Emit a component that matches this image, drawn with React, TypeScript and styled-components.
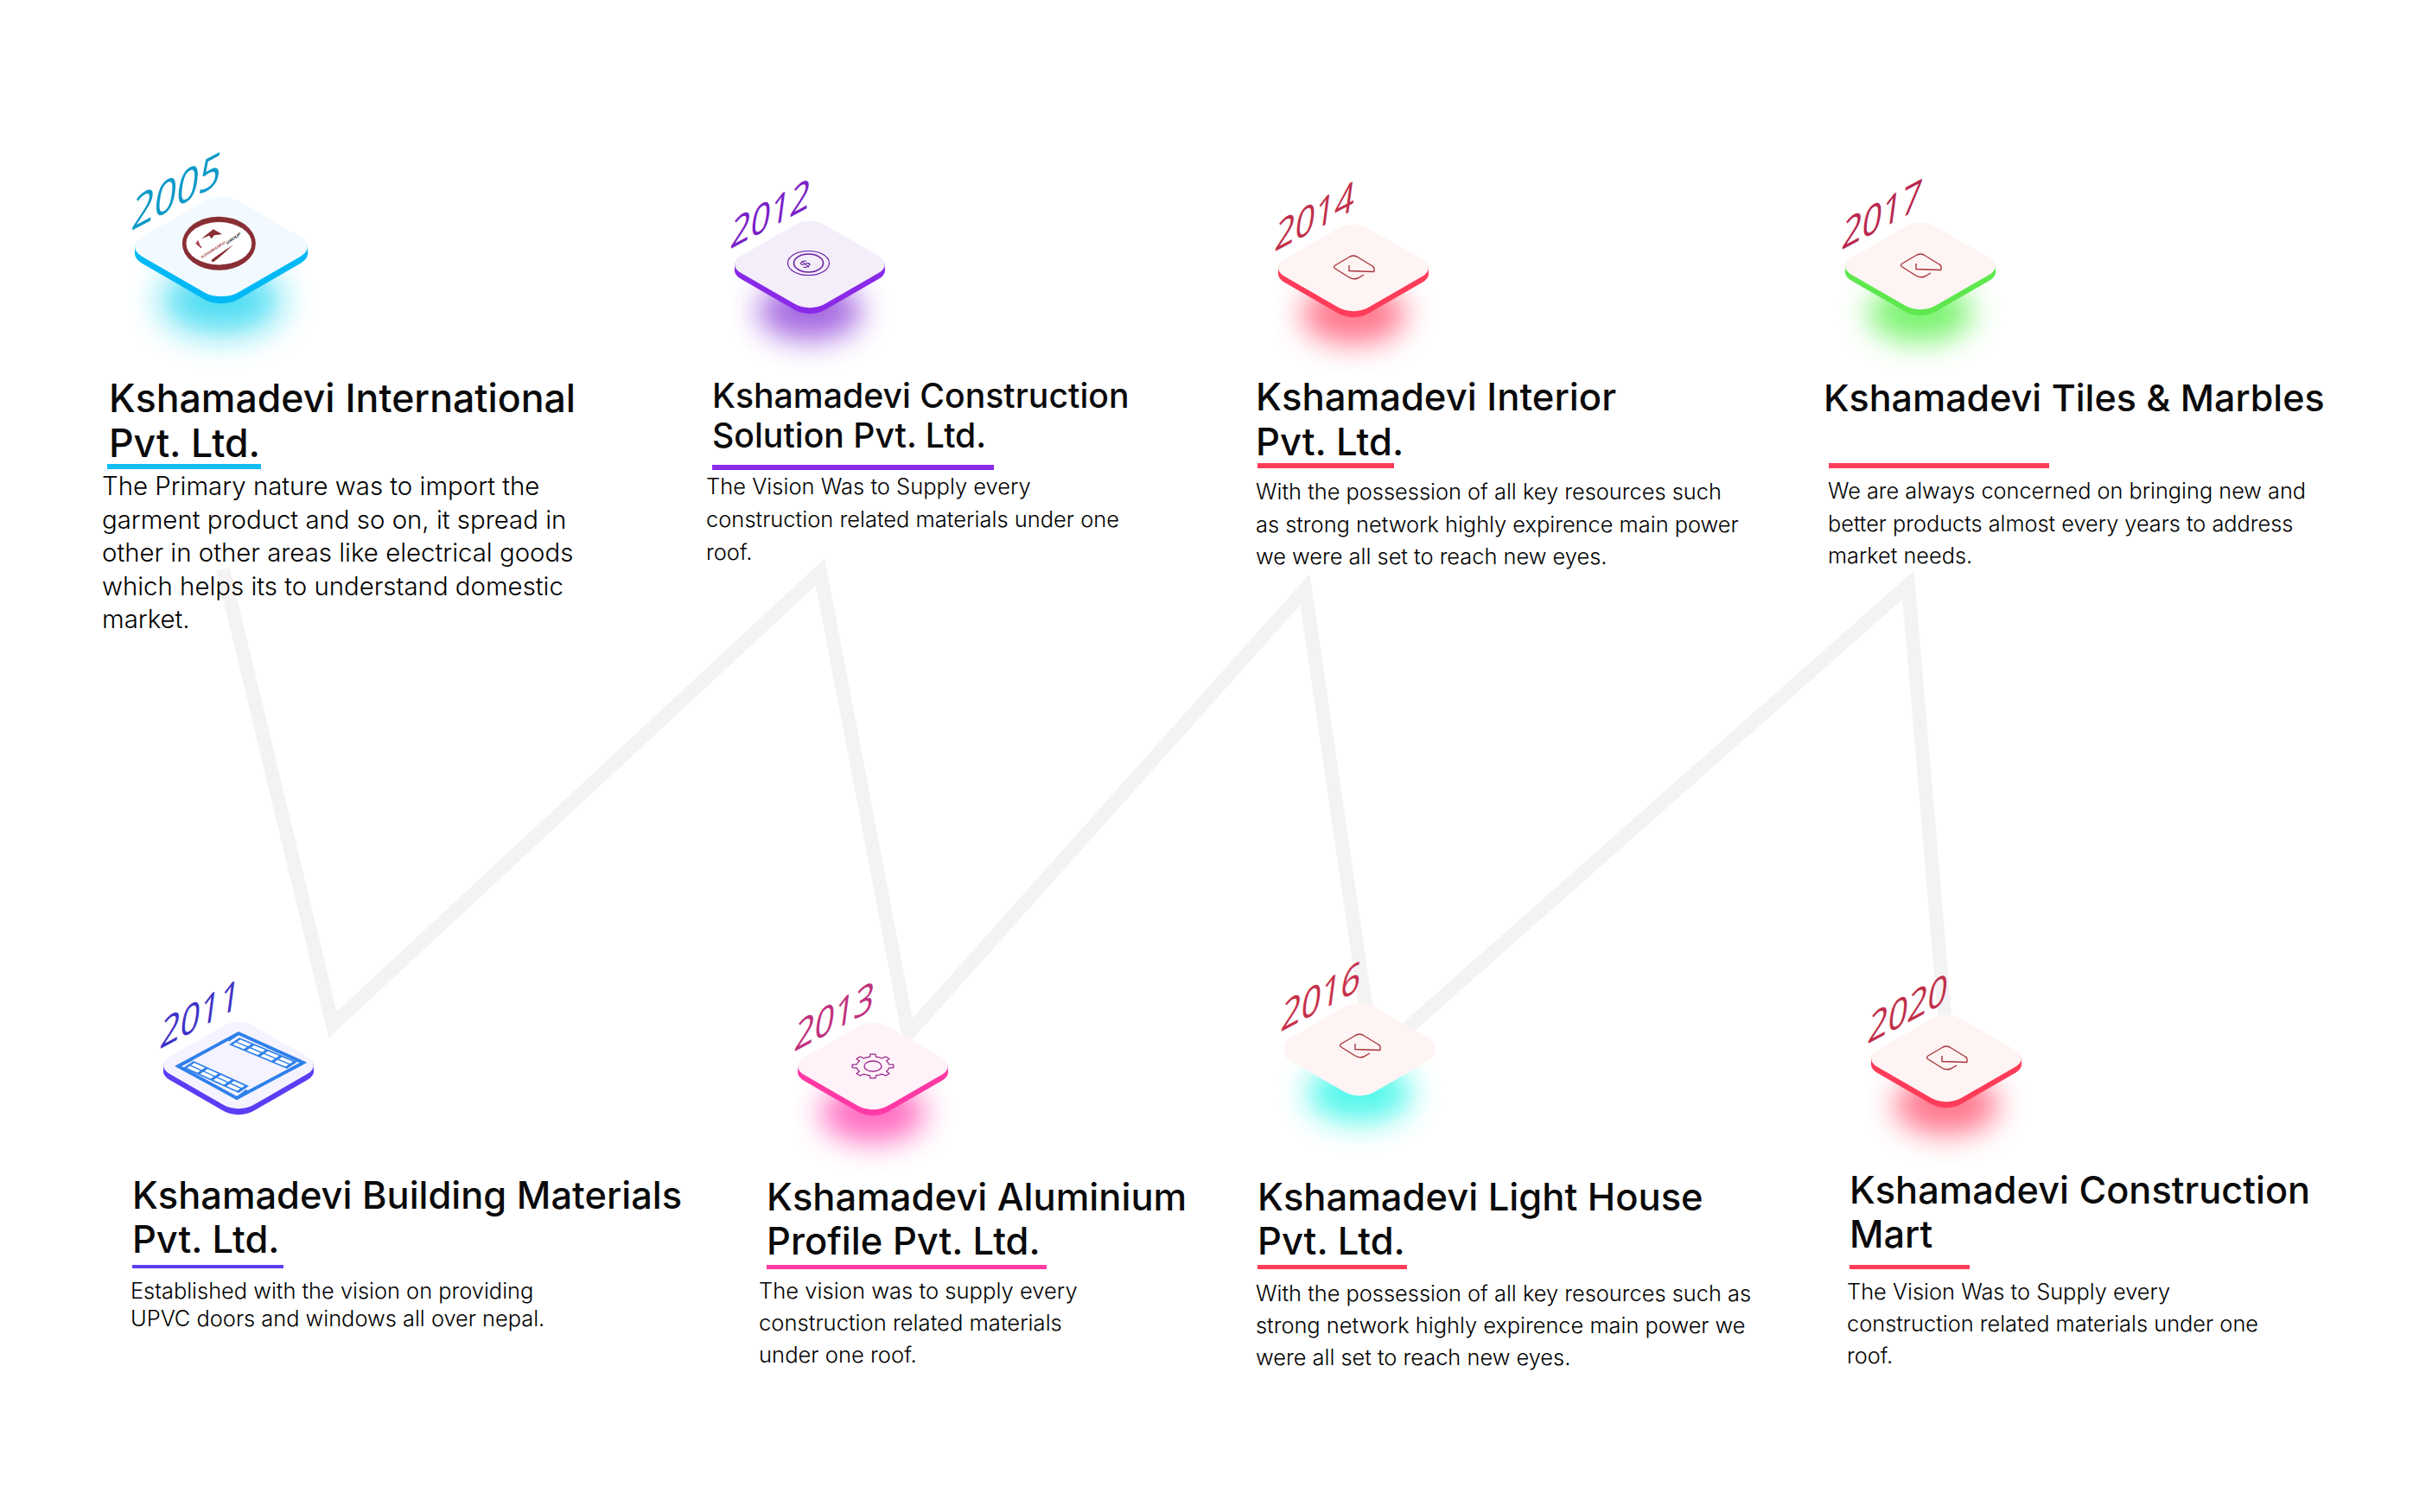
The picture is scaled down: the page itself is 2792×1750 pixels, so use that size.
import React from 'react'
import styled, { createGlobalStyle } from 'styled-components'

const GlobalStyle = createGlobalStyle`
  html, body {
    margin: 0;
    padding: 0;
    background: #fff;
  }
`

type IconKind = 'logo' | 'coin' | 'mail' | 'window' | 'gear'

type Milestone = {
  year: string
  yearColor: string
  yearSize: number
  yearX: number
  yearY: number
  face: string
  edge: string
  glow?: string
  icon: IconKind
  width: number
  top: number
  left: number
  tileX: number
  titleX: number
  titleTop: number
  titleSize: number
  titleLine: number
  title: string
  barX: number
  barTop: number
  barWidth: number
  barHeight: number
  barColor: string
  bodyX: number
  bodyTop: number
  bodySize: number
  bodyLine: number
  body: string
}

const MILESTONES: Milestone[] = [
  {
    year: '2005', yearColor: '#0e9ac8', yearSize: 45, yearX: -6, yearY: 46,
    face: '#f2faff', edge: '#00b9f5', glow: '#12d3ee', icon: 'logo', width: 200,
    top: 228, left: 18, tileX: 38, titleX: 8, titleTop: 83, titleSize: 44.6, titleLine: 52,
    title: 'Kshamadevi International\nPvt. Ltd.',
    barX: 6, barTop: -2, barWidth: 178, barHeight: 6, barColor: '#12bdf5',
    bodyX: 0, bodyTop: 1, bodySize: 29.4, bodyLine: 38.5,
    body: 'The Primary nature was to import the\ngarment product and so on, it spread in\nother in other areas like electrical goods\nwhich helps its to understand domestic\nmarket.',
  },
  {
    year: '2012', yearColor: '#7a20c8', yearSize: 40, yearX: -7, yearY: 39,
    face: '#f4eefb', edge: '#8a2be8', glow: '#8a3ad8', icon: 'coin', width: 174,
    top: 256, left: 17, tileX: 33, titleX: 7, titleTop: 71, titleSize: 39.2, titleLine: 46,
    title: 'Kshamadevi Construction\nSolution Pvt. Ltd.',
    barX: 7, barTop: 11, barWidth: 326, barHeight: 6, barColor: '#8a2be8',
    bodyX: 0, bodyTop: 0, bodySize: 25.5, bodyLine: 38,
    body: 'The Vision Was to Supply every\nconstruction related materials under one\nroof.',
  },
  {
    year: '2014', yearColor: '#c0304a', yearSize: 40, yearX: -6, yearY: 38,
    face: '#fff4f4', edge: '#ff3d5a', glow: '#ff4d6a', icon: 'mail', width: 174,
    top: 260, left: 13, tileX: 26, titleX: 0, titleTop: 66, titleSize: 43.6, titleLine: 52,
    title: 'Kshamadevi Interior\nPvt. Ltd.',
    barX: 2, barTop: -2, barWidth: 158, barHeight: 6, barColor: '#ff3d5a',
    bodyX: 0, bodyTop: 8, bodySize: 25.4, bodyLine: 37.5,
    body: 'With the possession of all key resources such\nas strong network highly expirence main power\nwe were all set to reach new eyes.',
  },
  {
    year: '2017', yearColor: '#b8274f', yearSize: 40, yearX: -6, yearY: 38,
    face: '#fff4f4', edge: '#5fe84f', glow: '#52f044', icon: 'mail', width: 174,
    top: 258, left: 10, tileX: 25, titleX: 0, titleTop: 68, titleSize: 43, titleLine: 52,
    title: 'Kshamadevi Tiles & Marbles',
    barX: 6, barTop: 50, barWidth: 255, barHeight: 6, barColor: '#ff3d5a',
    bodyX: 5, bodyTop: 7, bodySize: 25.3, bodyLine: 37.5,
    body: 'We are always concerned on bringing new and\nbetter products almost every years to address\nmarket needs.',
  },
  {
    year: '2011', yearColor: '#3f33c8', yearSize: 40, yearX: -6, yearY: 38,
    face: '#f5f3ff', edge: '#5b3ff5', icon: 'window', width: 174,
    top: 93, left: 51, tileX: 38, titleX: 2, titleTop: 67, titleSize: 43.4, titleLine: 51,
    title: 'Kshamadevi Building Materials\nPvt. Ltd.',
    barX: 2, barTop: 4, barWidth: 175, barHeight: 4, barColor: '#5b3ff5',
    bodyX: 0, bodyTop: 10, bodySize: 25.4, bodyLine: 32,
    body: 'Established with the vision on providing\nUPVC doors and windows all over nepal.',
  },
  {
    year: '2013', yearColor: '#c0307e', yearSize: 40, yearX: -6, yearY: 40,
    face: '#fff3f9', edge: '#ff3aa6', glow: '#ff3fae', icon: 'gear', width: 174,
    top: 94, left: 78, tileX: 45, titleX: 9, titleTop: 68, titleSize: 43.5, titleLine: 51,
    title: 'Kshamadevi Aluminium\nProfile Pvt. Ltd.',
    barX: 9, barTop: 2, barWidth: 324, barHeight: 5, barColor: '#ff3aa6',
    bodyX: 0, bodyTop: 6, bodySize: 25.6, bodyLine: 37,
    body: 'The vision was to supply every\nconstruction related materials\nunder one roof.',
  },
  {
    year: '2016', yearColor: '#c8304a', yearSize: 40, yearX: -6, yearY: 40,
    face: '#fff4f4', edge: '#fff4f4', glow: '#1ff5e6', icon: 'mail', width: 174,
    top: 71, left: 13, tileX: 33, titleX: 2, titleTop: 91, titleSize: 43.5, titleLine: 51,
    title: 'Kshamadevi Light House\nPvt. Ltd.',
    barX: 2, barTop: 2, barWidth: 173, barHeight: 5, barColor: '#ff3d5a',
    bodyX: 0, bodyTop: 9, bodySize: 25.4, bodyLine: 37,
    body: 'With the possession of all key resources such as\nstrong network highly expirence main power we\nwere all set to reach new eyes.',
  },
  {
    year: '2020', yearColor: '#c0304a', yearSize: 40, yearX: -6, yearY: 40,
    face: '#fff4f4', edge: '#ff3d5a', glow: '#ff4d6a', icon: 'mail', width: 174,
    top: 85, left: 37, tileX: 28, titleX: 3, titleTop: 69, titleSize: 43.3, titleLine: 51,
    title: 'Kshamadevi Construction\nMart',
    barX: 3, barTop: 10, barWidth: 139, barHeight: 5, barColor: '#ff3d5a',
    bodyX: 0, bodyTop: 7, bodySize: 25.4, bodyLine: 37,
    body: 'The Vision Was to Supply every\nconstruction related materials under one\nroof.',
  },
]

const TILE_MATRIX = 'matrix(.7071 .408 -.7071 .408 0 0)'

const gearPath = () => {
  const pts: string[] = []
  const teeth = 8
  for (let i = 0; i < teeth; i++) {
    const a = (i / teeth) * Math.PI * 2
    const step = (Math.PI * 2) / teeth
    const corners: [number, number][] = [
      [19, a - step * 0.5],
      [19, a - step * 0.24],
      [24, a - step * 0.16],
      [24, a + step * 0.16],
      [19, a + step * 0.24],
    ]
    corners.forEach(([r, t]) => {
      pts.push(`${(r * Math.cos(t)).toFixed(2)} ${(r * Math.sin(t) * 0.58).toFixed(2)}`)
    })
  }
  return `M${pts.join('L')}Z`
}

const LogoIcon = () => (
  <g>
    <ellipse cx="-2.3" cy="-3.2" rx="37" ry="27" fill="#8a2e35" />
    <ellipse cx="-2.3" cy="-3.2" rx="33" ry="21.5" fill="#fff" />
    <path d="M-20 -8 L-8 -17.5 L1 -12.5 L-7 -11.5 L-10 -8 L-12 -11 Z" fill="#8a2e35" />
    <path d="M-25.5 -4 L-20 1 M-22 -1 L-24 -6" stroke="#a83a44" strokeWidth="1.5" fill="none" />
    <path d="M-9.5 15 L-8 15.5 Q2 8 12 -2 Q0 6 -10 13.5 Z" fill="#8a2e35" />
    <Logotype x="0" y="0" transform="matrix(.84 -.54 .1 1 -19.7 12.2)">KSHAMADEVI</Logotype>
    <Logotag x="0" y="0" transform="matrix(.84 -.6 .1 1 5.5 -1.7)">GROUP</Logotag>
  </g>
)

const CoinIcon = () => (
  <g fill="none" stroke="#6a1fa0" strokeWidth="1.2" transform="translate(-1.5 -1.5)">
    <ellipse cx="0" cy="0" rx="24" ry="14" />
    <ellipse cx="0" cy="0" rx="17" ry="10.5" strokeWidth="1.6" />
    <CoinSign x="0" y="0" transform="matrix(.85 -.5 .6 .55 -0.5 4.5)">$</CoinSign>
  </g>
)

const MailIcon = () => (
  <path
    d="M24 4.5 L-5 3.5 L-5 -3 M24 4.5 L24 1 Q24 -1 22 -2 L4 -13 Q0 -15 -4 -13 L-21 -3 Q-24 -1 -21 1 L-5 11 Q0 14 5 12 L12 8"
    fill="none"
    stroke="#a8353a"
    strokeWidth="1.4"
  />
)

const WindowIcon = () => {
  const cells = (matrix: string) => (
    <g transform={matrix}>
      <rect width="1" height="1" fill="#2f80ea" />
      {[0, 1, 2, 3].map((i) =>
        [0, 1].map((j) => (
          <rect
            key={`${i}-${j}`}
            x={0.04 + i * 0.24}
            y={0.14 + j * 0.42}
            width="0.19"
            height="0.3"
            fill="#fff"
          />
        )),
      )}
    </g>
  )
  return (
    <g>
      <path d="M0 -37 L75 -3 L-2 38 L-70 1 Z" fill="none" stroke="#2f80ea" strokeWidth="3.8" />
      {cells('matrix(67 28 12 -8 -11 -24)')}
      {cells('matrix(64 29 12 -8 -64 3)')}
      <path d="M-70 1 L-54 -7 M75 -3 L60 5 M-2 38 L10 29 M0 -37 L-12 -29" stroke="#2f80ea" strokeWidth="3.4" />
    </g>
  )
}

const GearIcon = () => (
  <g fill="none" stroke="#9a2a90" strokeWidth="1.3">
    <path d={gearPath()} />
    <ellipse cx="0" cy="0" rx="10" ry="6" strokeWidth="1.4" />
  </g>
)

const ICONS: Record<IconKind, () => React.ReactElement> = {
  logo: LogoIcon,
  coin: CoinIcon,
  mail: MailIcon,
  window: WindowIcon,
  gear: GearIcon,
}

const Tile = ({ item, id }: { item: Milestone; id: string }) => {
  const Icon = ICONS[item.icon]
  const layers = [7, 6, 5, 4, 3, 2, 1]
  const height = (item.width * 108) / 174
  return (
    <TileArt width={item.width} height={height} viewBox="-87 -50 174 108">
      {item.glow && (
        <>
          <defs>
            <filter id={id} x="-80%" y="-100%" width="260%" height="300%">
              <feGaussianBlur stdDeviation="17" />
            </filter>
          </defs>
          <ellipse cx="0" cy="54" rx="60" ry="34" fill={item.glow} opacity="0.76" filter={`url(#${id})`} />
        </>
      )}
      {layers.map((dy) => (
        <g key={dy} transform={`translate(0 ${dy})`}>
          <rect x="-68.5" y="-68.5" width="137" height="137" rx="24" fill={item.edge} transform={TILE_MATRIX} />
        </g>
      ))}
      <rect x="-68.5" y="-68.5" width="137" height="137" rx="24" fill={item.face} transform={TILE_MATRIX} />
      <Icon />
    </TileArt>
  )
}

const MilestoneBlock = ({ item }: { item: Milestone }) => (
  <Block $top={item.top} $left={item.left}>
    <Head $x={item.tileX} $width={item.width}>
      <Tile item={item} id={`glow-${item.year}`} />
      <Year $color={item.yearColor} $size={item.yearSize} $x={item.yearX} $y={item.yearY}>
        {item.year}
      </Year>
    </Head>
    <Title $x={item.titleX} $top={item.titleTop} $size={item.titleSize} $line={item.titleLine}>
      {item.title}
    </Title>
    <Underline
      $x={item.barX}
      $top={item.barTop}
      $width={item.barWidth}
      $height={item.barHeight}
      $color={item.barColor}
    />
    <Body $x={item.bodyX} $top={item.bodyTop} $size={item.bodySize} $line={item.bodyLine}>
      {item.body}
    </Body>
  </Block>
)

const App = () => {
  return (
    <Page>
      <GlobalStyle />
      <Zigzag viewBox="0 0 2792 1750" width="2792" height="1750">
        <polyline
          points="258,659 385,1186 949,662 1051,1196 1510,682 1589,1225 2208,677 2250,1175"
          fill="none"
          stroke="#f3f3f3"
          strokeWidth="16"
          strokeLinejoin="miter"
          strokeMiterlimit="20"
        />
      </Zigzag>
      <Timeline>
        {MILESTONES.map((item) => (
          <MilestoneBlock key={item.year} item={item} />
        ))}
      </Timeline>
    </Page>
  )
}

export default App

const Page = styled.div`
  position: relative;
  width: 2792px;
  height: 1750px;
  overflow: hidden;
  background: #fff;
`

const Zigzag = styled.svg`
  position: absolute;
  left: 0;
  top: 0;
`

const Timeline = styled.div`
  position: relative;
  display: grid;
  grid-template-columns: 700px 640px 660px 692px;
  grid-template-rows: 1090px 660px;
  padding-left: 100px;
`

const Block = styled.section<{ $top: number; $left: number }>`
  display: flex;
  flex-direction: column;
  align-items: flex-start;
  padding: ${(p) => p.$top}px 0 0 ${(p) => p.$left}px;
`

const Head = styled.div<{ $x: number; $width: number }>`
  position: relative;
  margin-left: ${(p) => p.$x}px;
  width: ${(p) => p.$width}px;
  line-height: 0;
`

const TileArt = styled.svg`
  display: block;
  overflow: visible;
`

const Year = styled.span<{ $color: string; $size: number; $x: number; $y: number }>`
  position: absolute;
  left: ${(p) => p.$x}px;
  top: ${(p) => p.$y - p.$size}px;
  font-family: 'Open Sans', sans-serif;
  font-weight: 500;
  font-size: ${(p) => p.$size}px;
  line-height: ${(p) => p.$size}px;
  color: ${(p) => p.$color};
  transform-origin: 0 100%;
  transform: skewY(-28deg) skewX(-8deg) scaleY(1.15);
`

const Title = styled.h2<{ $x: number; $top: number; $size: number; $line: number }>`
  margin: ${(p) => p.$top}px 0 0 ${(p) => p.$x}px;
  font-family: Inter, 'Noto Sans', sans-serif;
  font-weight: 500;
  font-size: ${(p) => p.$size}px;
  line-height: ${(p) => p.$line}px;
  color: #0a0a0a;
  white-space: pre-line;
`

const Underline = styled.div<{ $x: number; $top: number; $width: number; $height: number; $color: string }>`
  margin: ${(p) => p.$top}px 0 0 ${(p) => p.$x}px;
  width: ${(p) => p.$width}px;
  height: ${(p) => p.$height}px;
  background: ${(p) => p.$color};
`

const Body = styled.p<{ $x: number; $top: number; $size: number; $line: number }>`
  margin: ${(p) => p.$top}px 0 0 ${(p) => p.$x}px;
  font-family: Inter, 'Noto Sans', sans-serif;
  font-weight: 300;
  font-size: ${(p) => p.$size}px;
  line-height: ${(p) => p.$line}px;
  color: #000;
  white-space: pre-line;
`

const Logotype = styled.text`
  font-family: 'Liberation Sans', sans-serif;
  font-size: 4.2px;
  font-weight: 700;
  fill: #a83a44;
`

const Logotag = styled.text`
  font-family: 'Liberation Sans', sans-serif;
  font-size: 4.5px;
  font-weight: 700;
  fill: #111;
`

const CoinSign = styled.text`
  font-family: 'Liberation Sans', sans-serif;
  font-size: 17px;
  fill: #6a1fa0;
  stroke: none;
  text-anchor: middle;
`
